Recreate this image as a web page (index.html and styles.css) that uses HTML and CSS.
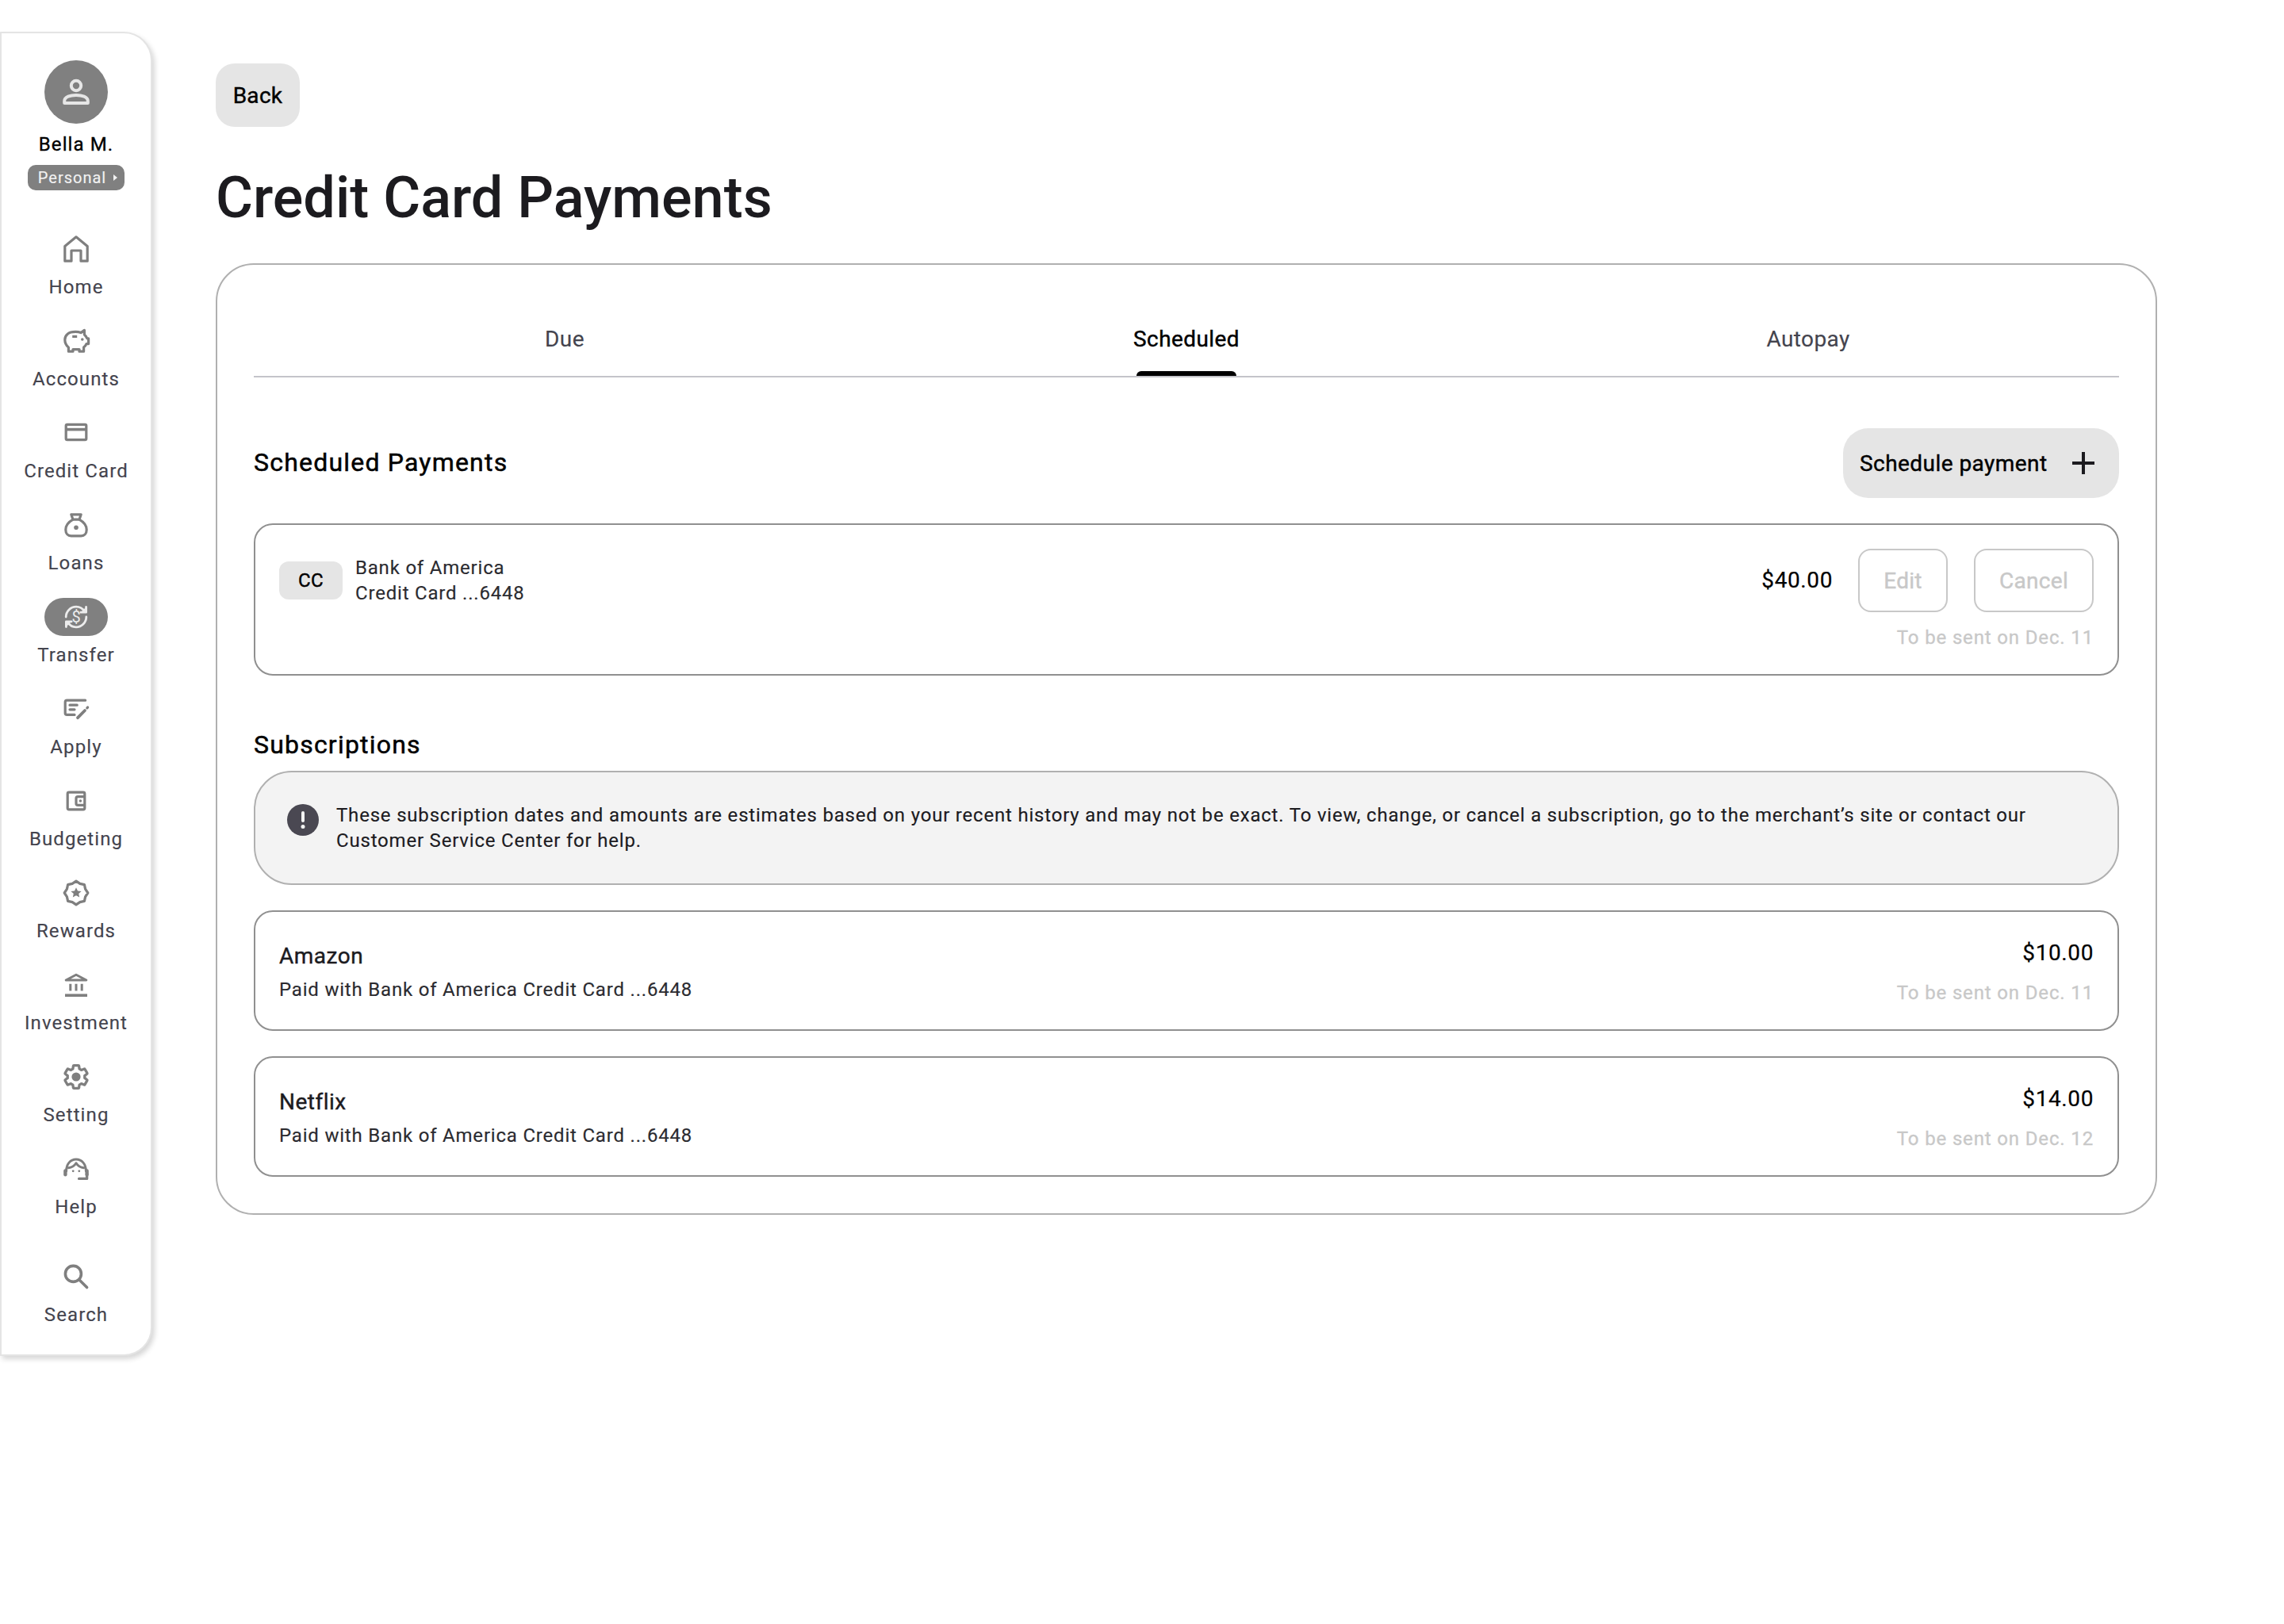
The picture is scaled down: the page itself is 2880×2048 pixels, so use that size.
FILE: index.html
```html
<!DOCTYPE html>
<html lang="en">
<head>
<meta charset="utf-8">
<title>Credit Card Payments</title>
<link rel="stylesheet" href="styles.css">
</head>
<body>
<div class="page">
  <aside class="sidebar">
    <div class="avatar">
      <svg class="icon" viewBox="0 0 24 24" fill="none" stroke="#e6e6e6" stroke-width="2" stroke-linejoin="round"><circle cx="12" cy="8" r="3.1"/><path d="M4.600 19V17.800C4.600 15 8.500 14 12 14S19.400 15 19.400 17.800V19Z"/></svg>
    </div>
    <div class="user-name">Bella M.</div>
    <div class="user-type"><span>Personal</span><i class="caret"></i></div>
    <nav class="nav">
      <a class="nav-item">
        <span class="nav-icon"><svg class="icon" viewBox="0 0 24 24" fill="none" stroke="#7f7f7f" stroke-width="1.6" stroke-linejoin="round"><path d="M4.900 19.600V10.200L12 4.400L19.100 10.200V19.600H15V13H9V19.600Z"/></svg></span>
        <span class="nav-label">Home</span>
      </a>
      <a class="nav-item">
        <span class="nav-icon"><svg class="icon" viewBox="0 0 24 24" fill="none" stroke="#7f7f7f" stroke-width="1.6" stroke-linejoin="round"><path d="M6.600 7.600C7.800 6.600 9.600 6.200 11.600 6.200C12.800 6.200 14 6.400 15 6.800L17.200 5.200V8C18 8.700 18.600 9.600 18.900 10.400H19.800V13.800H18.500C18.100 14.700 17.500 15.400 16.800 16V18.600H14V17.300H10V18.600H7.200V16.100C5.600 14.600 4.900 13 4.900 11.200C4.900 9.600 5.500 8.500 6.600 7.600Z"/><path d="M9.600 9.200H12.600"/><circle cx="15.900" cy="11" r=".9" fill="#7f7f7f" stroke="none"/></svg></span>
        <span class="nav-label">Accounts</span>
      </a>
      <a class="nav-item">
        <span class="nav-icon"><svg class="icon" viewBox="0 0 24 24" fill="none" stroke="#7f7f7f" stroke-width="1.6" stroke-linejoin="round"><rect x="5.600" y="6.700" width="12.800" height="9.600" rx=".8"/><path d="M5.600 9.800H18.400" stroke-width="1.800"/></svg></span>
        <span class="nav-label">Credit Card</span>
      </a>
      <a class="nav-item">
        <span class="nav-icon"><svg class="icon" viewBox="0 0 24 24" fill="none" stroke="#7f7f7f" stroke-width="1.6" stroke-linejoin="round"><path d="M8.900 5.400H15.100L14 8.600H10Z"/><path d="M10 8.600C7.200 10.200 5.400 12.400 5.400 15C5.400 17.400 6.800 18.900 8.800 18.900H15.200C17.200 18.900 18.600 17.400 18.600 15C18.600 12.400 16.800 10.200 14 8.600"/><circle cx="12" cy="13.600" r="1.400" fill="#7f7f7f" stroke="none"/></svg></span>
        <span class="nav-label">Loans</span>
      </a>
      <a class="nav-item">
        <span class="nav-icon nav-icon-active"><svg class="icon" viewBox="0 0 24 24" fill="none" stroke="#ececec" stroke-width="1.400" stroke-linejoin="round" stroke-linecap="round"><path d="M5.600 12C5.600 8.500 8.500 5.600 12 5.600C14.300 5.600 16.200 6.800 17.300 8.600"/><path d="M18.400 12C18.400 15.500 15.500 18.400 12 18.400C9.700 18.400 7.800 17.200 6.700 15.400"/><path d="M18.300 5.700V9.100H14.900" fill="#ececec"/><path d="M5.700 18.300V14.900H9.100" fill="#ececec"/><text class="dollar" x="12" y="15.400" text-anchor="middle">$</text></svg></span>
        <span class="nav-label">Transfer</span>
      </a>
      <a class="nav-item">
        <span class="nav-icon"><svg class="icon" viewBox="0 0 24 24" fill="none" stroke="#7f7f7f" stroke-width="1.600" stroke-linejoin="round" stroke-linecap="round"><path d="M17.800 6.600H6.200C5.600 6.600 5.100 7.100 5.100 7.700V14.600C5.100 15.200 5.600 15.700 6.200 15.700H11"/><path d="M8 9.600H12.600M8 12.400H11"/><path d="M13 17.600L17.500 13" stroke-width="1.900"/><path d="M18.900 11.400L19.300 11"/></svg></span>
        <span class="nav-label">Apply</span>
      </a>
      <a class="nav-item">
        <span class="nav-icon"><svg class="icon" viewBox="0 0 24 24" fill="none" stroke="#7f7f7f" stroke-width="1.600" stroke-linejoin="round"><rect x="6.600" y="6.600" width="10.800" height="10.800" rx=".9"/><path d="M17.400 9.300H13.100C12.500 9.300 12 9.800 12 10.400V13.600C12 14.200 12.500 14.700 13.100 14.700H17.400"/><circle cx="14.700" cy="12" r=".9" fill="#7f7f7f" stroke="none"/></svg></span>
        <span class="nav-label">Budgeting</span>
      </a>
      <a class="nav-item">
        <span class="nav-icon"><svg class="icon" viewBox="0 0 24 24" fill="none" stroke="#7f7f7f" stroke-width="1.600" stroke-linejoin="round"><path d="M12 4.600L14.400 6.200L17.200 6.800L17.800 9.600L19.400 12L17.800 14.400L17.200 17.200L14.400 17.800L12 19.400L9.600 17.800L6.800 17.200L6.200 14.400L4.600 12L6.200 9.600L6.800 6.800L9.600 6.200Z"/><path d="M12 8.600L13 10.800L15.300 11L13.600 12.500L14.100 14.800L12 13.600L9.900 14.800L10.400 12.500L8.700 11L11 10.800Z" fill="#7f7f7f" stroke="none"/></svg></span>
        <span class="nav-label">Rewards</span>
      </a>
      <a class="nav-item">
        <span class="nav-icon"><svg class="icon" viewBox="0 0 24 24" fill="none" stroke="#7f7f7f" stroke-width="1.500" stroke-linejoin="round"><path d="M5.600 9L12 5.600L18.400 9Z"/><path d="M8.400 11.400V15.800M12 11.400V15.800M15.600 11.400V15.800"/><path d="M5 18.600H19" stroke-width="1.800"/></svg></span>
        <span class="nav-label">Investment</span>
      </a>
      <a class="nav-item">
        <span class="nav-icon"><svg class="icon" viewBox="0 0 24 24" fill="none" stroke="#7f7f7f" stroke-linejoin="round"><g transform="translate(3 3) scale(.75)" stroke-width="2.200"><path d="M19.140 12.940c.04-.3.06-.61.06-.94 0-.32-.02-.64-.07-.94l2.030-1.580c.18-.14.23-.41.12-.61l-1.920-3.320c-.12-.22-.37-.29-.59-.22l-2.390.96c-.5-.38-1.030-.7-1.620-.94l-.36-2.540c-.04-.24-.24-.41-.48-.41h-3.840c-.24 0-.43.17-.47.41l-.36 2.540c-.59.24-1.130.57-1.620.94l-2.390-.96c-.22-.08-.47 0-.59.22L2.740 8.870c-.12.21-.08.47.12.61l2.030 1.580c-.05.3-.09.63-.09.94s.02.64.07.94l-2.030 1.580c-.18.14-.23.41-.12.61l1.920 3.320c.12.22.37.29.59.22l2.390-.96c.5.38 1.030.7 1.620.94l.36 2.540c.05.24.24.41.48.41h3.840c.24 0 .44-.17.47-.41l.36-2.540c.59-.24 1.130-.56 1.620-.94l2.390.96c.22.08.47 0 .59-.22l1.920-3.320c.12-.22.07-.47-.12-.61l-2.010-1.580z"/></g><circle cx="12" cy="12" r="2.800" fill="#7f7f7f" stroke="none"/></svg></span>
        <span class="nav-label">Setting</span>
      </a>
      <a class="nav-item">
        <span class="nav-icon"><svg class="icon" viewBox="0 0 24 24" fill="none" stroke="#7f7f7f" stroke-width="1.500" stroke-linejoin="round" stroke-linecap="round"><path d="M5.800 13.400C5.800 9 8.400 6 12 6S18.200 9 18.200 13.400"/><path d="M7.200 11.400C9.600 11.200 11 10 12 8.400C13 10 14.400 11.200 16.800 11.400"/><path d="M5.200 13.200V15.600" stroke-width="2.200"/><path d="M18.800 13.200V15.600" stroke-width="2.200"/><path d="M18.800 15V18.200H13.800" stroke-width="1.700"/><circle cx="10.100" cy="13.400" r=".7" fill="#7f7f7f" stroke="none"/><circle cx="13.900" cy="13.400" r=".7" fill="#7f7f7f" stroke="none"/></svg></span>
        <span class="nav-label">Help</span>
      </a>
      <a class="nav-item nav-item-search">
        <span class="nav-icon"><svg class="icon" viewBox="0 0 24 24" fill="none" stroke="#7f7f7f" stroke-width="1.800" stroke-linecap="round"><circle cx="10.200" cy="10.200" r="5"/><path d="M14 14L18.800 18.800"/></svg></span>
        <span class="nav-label">Search</span>
      </a>
    </nav>
  </aside>

  <main class="main">
    <button class="btn-back">Back</button>
    <h1 class="title">Credit Card Payments</h1>
    <section class="card">
      <div class="tabs">
        <div class="tab">Due</div>
        <div class="tab tab-active">Scheduled</div>
        <div class="tab">Autopay</div>
      </div>
      <div class="section-head">
        <h2 class="section-title">Scheduled Payments</h2>
        <button class="btn-schedule"><span>Schedule payment</span>
          <svg class="plus" viewBox="0 0 28 28" fill="none" stroke="#1c1b1f" stroke-width="4"><path d="M14 0V28M0 14H28"/></svg>
        </button>
      </div>
      <div class="payment">
        <div class="payment-top">
          <div class="chip">CC</div>
          <div class="payment-acct">Bank of America<br>Credit Card ...6448</div>
          <div class="amount payment-amount">$40.00</div>
          <button class="btn-outline btn-edit">Edit</button>
          <button class="btn-outline btn-cancel">Cancel</button>
        </div>
        <div class="date date-first">To be sent on Dec. 11</div>
      </div>
      <h2 class="section-title section-title-sub">Subscriptions</h2>
      <div class="notice">
        <svg class="notice-icon" viewBox="0 0 40 40"><circle cx="20" cy="20" r="20" fill="#4a4852"/><rect x="18" y="9" width="4" height="14" rx="2" fill="#f3f3f3"/><circle cx="20" cy="28.500" r="2.500" fill="#f3f3f3"/></svg>
        <p class="notice-text">These subscription dates and amounts are estimates based on your recent history and may not be exact. To view, change, or cancel a subscription, go to the merchant’s site or contact our Customer Service Center for help.</p>
      </div>
      <div class="sub">
        <div class="sub-left">
          <div class="sub-name">Amazon</div>
          <div class="sub-paid">Paid with Bank of America Credit Card ...6448</div>
        </div>
        <div class="sub-right">
          <div class="amount">$10.00</div>
          <div class="date">To be sent on Dec. 11</div>
        </div>
      </div>
      <div class="sub">
        <div class="sub-left">
          <div class="sub-name">Netflix</div>
          <div class="sub-paid">Paid with Bank of America Credit Card ...6448</div>
        </div>
        <div class="sub-right">
          <div class="amount">$14.00</div>
          <div class="date">To be sent on Dec. 12</div>
        </div>
      </div>
    </section>
  </main>
</div>
</body>
</html>
```
FILE: styles.css
```css
* { box-sizing: border-box; }
html, body { margin: 0; padding: 0; background: #fff; }
body { font-family: Roboto, "Liberation Sans", sans-serif; color: #1c1b1f; -webkit-text-stroke: .15px currentColor; }
.page { display: flex; align-items: flex-start; width: 2880px; height: 2048px; overflow: hidden; }

/* sidebar */
.sidebar {
  width: 192px; height: 1670px; margin-top: 40px; padding-top: 34px;
  display: flex; flex-direction: column; align-items: center; flex: none;
  background: #fff; border: 2px solid #e4e4e4; border-radius: 0 36px 36px 0;
  box-shadow: 3px 4px 6px rgba(0,0,0,.16);
}
.icon { width: 48px; height: 48px; display: block; }
.avatar { width: 80px; height: 80px; border-radius: 50%; background: #808080; display: flex; align-items: center; justify-content: center; }
.user-name { margin-top: 10px; font-size: 24px; line-height: 32px; letter-spacing: 1.1px; color: #000; -webkit-text-stroke: .35px currentColor; }
.user-type { margin-top: 10px; height: 32px; width: 122px; padding-left: 4px; border-radius: 10px; background: #808080; color: #f2f2f2; font-size: 20px; letter-spacing: 1px; display: flex; align-items: center; justify-content: center; gap: 9px; }
.caret { width: 0; height: 0; border-left: 5px solid #f2f2f2; border-top: 4.500px solid transparent; border-bottom: 4.500px solid transparent; }
.nav { margin-top: 50px; display: flex; flex-direction: column; align-items: center; }
.nav-item { height: 116px; width: 160px; display: flex; flex-direction: column; align-items: center; }
.nav-item-search { margin-top: 20px; }
.nav-icon { width: 80px; height: 48px; border-radius: 24px; display: flex; align-items: center; justify-content: center; }
.nav-icon-active { background: #808080; }
.nav-label { margin-top: 8px; font-size: 24px; line-height: 32px; letter-spacing: 1.1px; color: #44444e; white-space: nowrap; }
.dollar { font-family: Roboto, sans-serif; font-size: 10px; fill: #ececec; stroke: none; -webkit-text-stroke: 0; }

/* main */
.main { width: 2448px; margin-left: 80px; padding-top: 80px; flex: none; }
button { font-family: inherit; cursor: pointer; padding: 0; }
.btn-back { display: block; width: 106px; height: 80px; border: 0; border-radius: 24px; background: #e5e5e5; color: #000; font-size: 28px; letter-spacing: .3px; -webkit-text-stroke: .4px currentColor; }
.title { margin: 46px 0 38px; font-size: 72px; line-height: 88px; font-weight: 500; color: #1c1b1f; -webkit-text-stroke: 0; }
.card { border: 2px solid #b0b0b0; border-radius: 48px; padding: 46px 46px 46px; background: #fff; }
.tabs { display: flex; height: 96px; border-bottom: 2px solid #c4c4ca; }
.tab { flex: 1; display: flex; align-items: center; justify-content: center; font-size: 28px; letter-spacing: .4px; color: #44444e; position: relative; }
.tab-active { color: #000; -webkit-text-stroke: .4px currentColor; }
.tab-active::after { content: ""; position: absolute; left: 50%; bottom: 0; width: 126px; height: 6px; margin-left: -63px; background: #000; border-radius: 6px 6px 0 0; }
.section-head { margin-top: 63px; display: flex; align-items: center; justify-content: space-between; padding-top: 1px; }
.section-title { margin: 0; font-size: 32px; line-height: 40px; font-weight: 400; letter-spacing: 1.2px; color: #000; position: relative; top: -1px; -webkit-text-stroke: .5px currentColor; }
.section-title-sub { margin: 67px 0 13px; top: 0; }
.btn-schedule { width: 348px; height: 88px; border: 0; border-radius: 32px; background: #e5e5e5; color: #000; font-size: 28px; letter-spacing: .45px; display: flex; align-items: center; padding-left: 21px; gap: 31px; -webkit-text-stroke: .4px currentColor; }
.plus { width: 28px; height: 28px; display: block; }
.payment { margin-top: 32px; border: 2px solid #909090; border-radius: 24px; padding: 30px; height: 192px; }
.payment-top { display: flex; align-items: center; height: 80px; }
.chip { width: 80px; height: 48px; border-radius: 12px; background: #e5e5e5; display: flex; align-items: center; justify-content: center; font-size: 24px; letter-spacing: .5px; color: #000; -webkit-text-stroke: .4px currentColor; }
.payment-acct { margin-left: 16px; font-size: 24px; line-height: 32px; letter-spacing: .8px; color: #2b2b30; }
.amount { font-size: 28px; line-height: 36px; letter-spacing: .6px; color: #000; text-align: right; -webkit-text-stroke: .2px currentColor; }
.payment-amount { margin-left: auto; margin-right: 32px; }
.btn-outline { height: 80px; border: 2px solid #c8c8c8; border-radius: 16px; background: #fff; color: #c8c8c8; font-size: 28px; letter-spacing: .3px; -webkit-text-stroke: .4px currentColor; }
.btn-edit { width: 113px; margin-right: 33px; }
.btn-cancel { width: 151px; }
.date { font-size: 24px; line-height: 32px; letter-spacing: .85px; color: #c8c8c8; text-align: right; -webkit-text-stroke: .3px currentColor; }
.date-first { margin-top: 16px; }
.notice { height: 144px; border: 2px solid #b0b0b0; border-radius: 48px; background: #f3f3f3; padding: 38px 64px 0 40px; display: flex; align-items: flex-start; gap: 22px; }
.notice-icon { width: 40px; height: 40px; margin-top: 2px; flex: none; }
.notice-text { margin: 0; font-size: 24px; line-height: 32px; letter-spacing: .8px; color: #1c1b1f; }
.sub { margin-top: 32px; height: 152px; border: 2px solid #909090; border-radius: 24px; padding: 0 30px; display: flex; align-items: center; justify-content: space-between; }
.sub-left { display: flex; flex-direction: column; gap: 8px; padding-top: 4px; }
.sub-name { font-size: 28px; line-height: 36px; letter-spacing: .5px; color: #1c1b1f; -webkit-text-stroke: .4px currentColor; }
.sub-paid { font-size: 24px; line-height: 32px; letter-spacing: .8px; color: #2b2b30; }
.sub-right { display: flex; flex-direction: column; gap: 16px; padding-top: 3px; }
```
